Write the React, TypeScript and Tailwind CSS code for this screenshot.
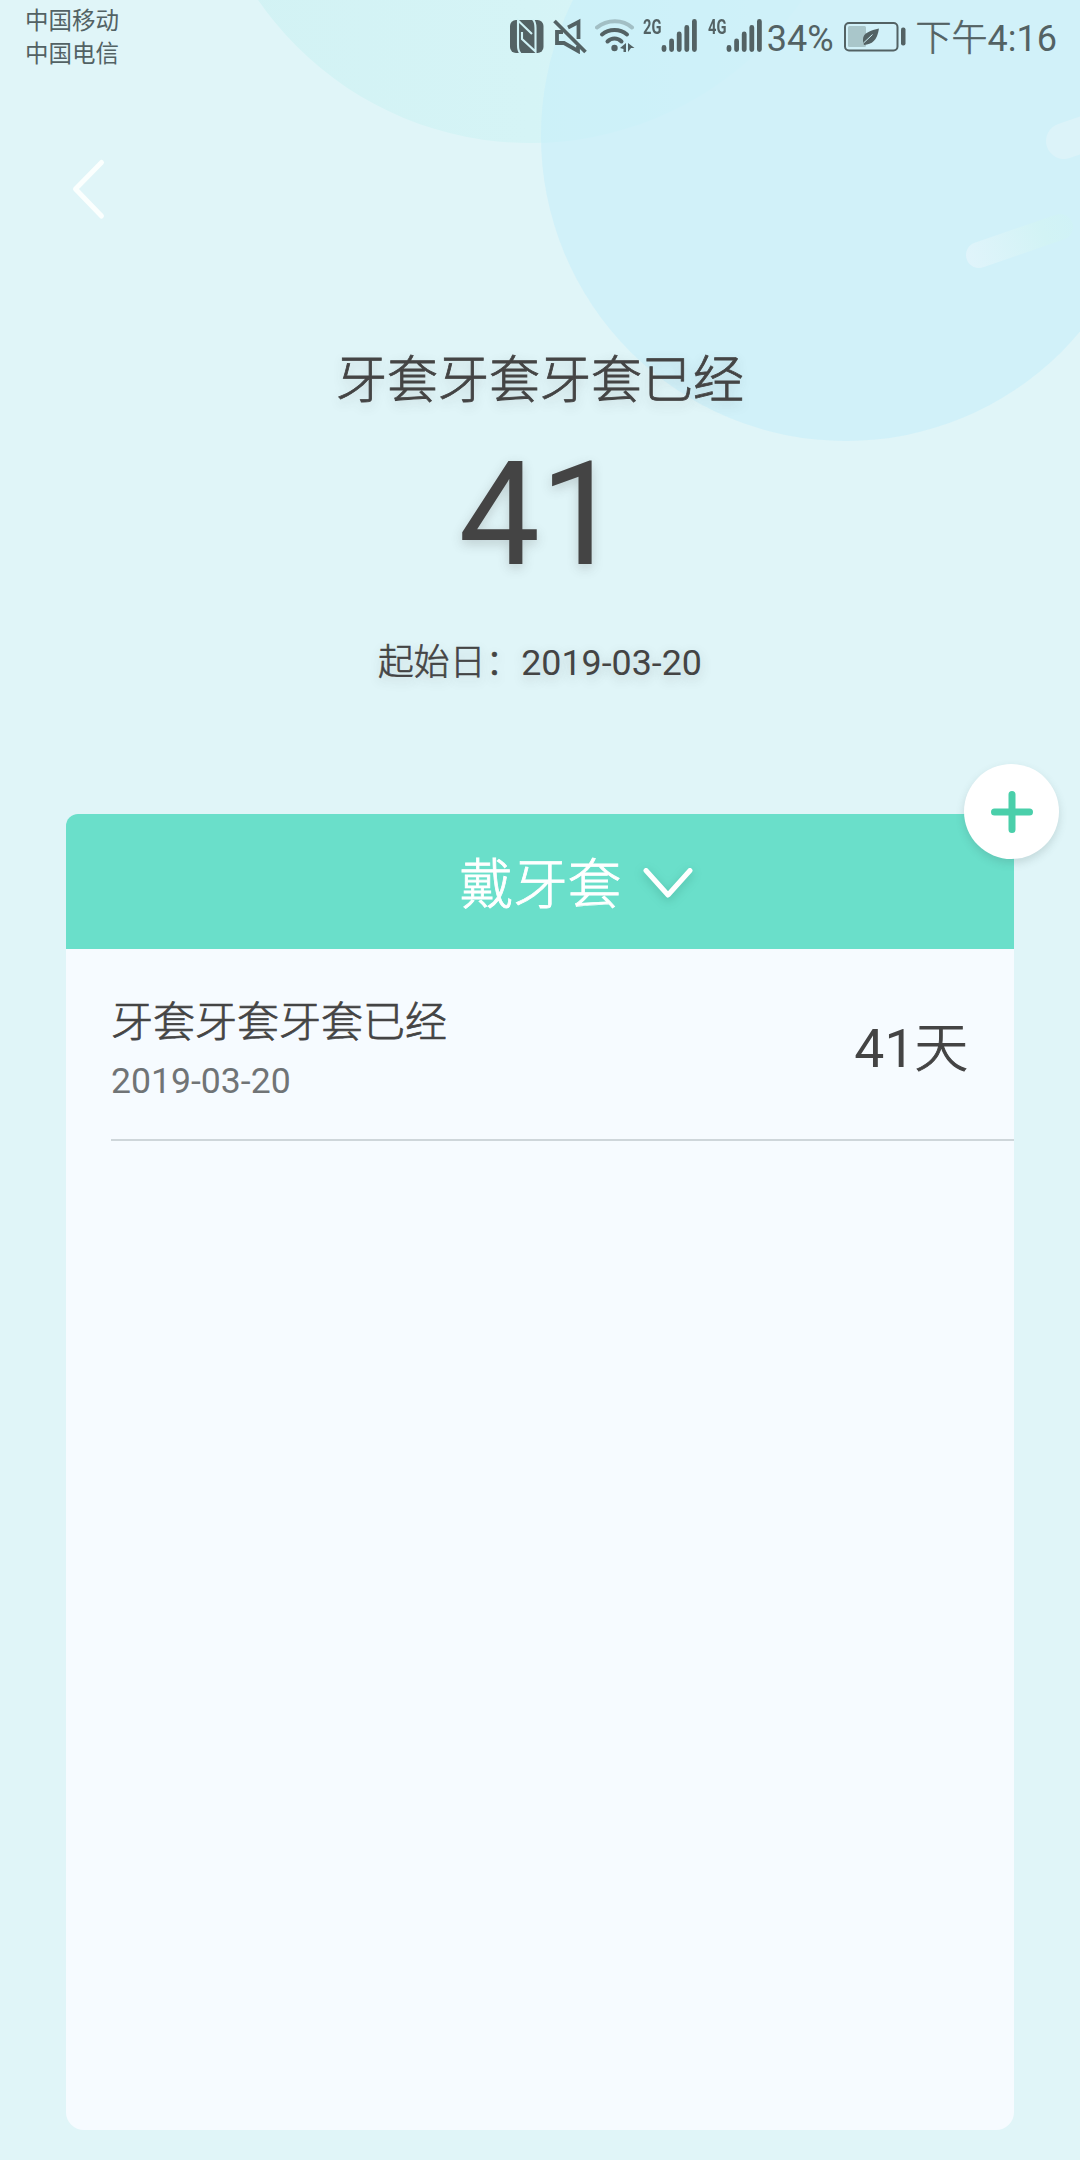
import { useState } from "react";

const records = [
  { id: 1, title: "牙套牙套牙套已经", date: "2019-03-20", days: 41 },
];

function Backdrop() {
  return (
    <svg
      className="absolute inset-0 pointer-events-none"
      width="1080"
      height="460"
      viewBox="0 0 1080 460"
      fill="none"
    >
      <defs>
        <linearGradient id="green" x1="0" y1="0" x2="1" y2="0">
          <stop offset="0" stopColor="#d2f2f4" />
          <stop offset="0.5" stopColor="#d5f4f6" />
          <stop offset="1" stopColor="#def5f8" />
        </linearGradient>
        <linearGradient
          id="comet"
          gradientUnits="userSpaceOnUse"
          x1="966"
          y1="258"
          x2="1076"
          y2="218"
        >
          <stop offset="0" stopColor="#e0f4fb" />
          <stop offset="0.7" stopColor="#d2f3f5" />
          <stop offset="1" stopColor="#d0f2f7" />
        </linearGradient>
      </defs>
      <circle cx="530" cy="-187" r="330" fill="url(#green)" />
      <circle cx="846" cy="136" r="305" fill="#c6effa" fillOpacity="0.6" />
      <path
        d="M979 255L1060 227"
        stroke="url(#comet)"
        strokeWidth="26"
        strokeLinecap="round"
      />
      <path
        d="M1064 141L1120 122"
        stroke="#dcf3f9"
        strokeWidth="36"
        strokeLinecap="round"
      />
    </svg>
  );
}

function Signal({ label }: { label: string }) {
  return (
    <div className="relative h-[34px] w-[54px]">
      <span className="absolute left-0 top-0 text-[21px] leading-[16px] font-bold origin-left scale-x-[0.7]">
        {label}
      </span>
      <svg
        className="absolute left-[18px] top-0"
        width="36"
        height="34"
        viewBox="0 0 36 34"
        stroke="currentColor"
        strokeWidth="4.8"
        strokeLinecap="round"
      >
        <path d="M3 28.5v2M10.6 22v8.5M18.2 15v15.5M25.8 8.5v22M33.4 2.5v28" />
      </svg>
    </div>
  );
}

function StatusBar() {
  return (
    <div className="relative h-[72px] pl-[25px] pr-[23px] flex justify-between text-[#536264]">
      <div className="pt-[5px] text-[23.5px] leading-[33px]">
        <p>中国移动</p>
        <p>中国电信</p>
      </div>

      <div className="flex items-start pt-[18px]">
        <svg width="34" height="36" viewBox="0 0 34 36" className="mr-[9px]">
          <rect x="0" y="2" width="33.5" height="33" rx="6" fill="currentColor" />
          <path
            d="M10.500 35.5C8 33 8 31 8 27V2.500L22 16M23 1.500C25.500 4 25.500 6 25.500 10V33.500L12 21V14"
            fill="none"
            stroke="#cff1f5"
            strokeWidth="2.1"
          />
        </svg>

        <svg
          width="34"
          height="36"
          viewBox="0 0 34 36"
          fill="none"
          stroke="currentColor"
          strokeWidth="3.8"
          className="mr-[8px]"
        >
          <path d="M15 9.5L25.500 4v17M10 14H4v11h7l14 8v-5" />
          <path d="M1.5 3l31 31" />
        </svg>

        <svg
          width="41"
          height="36"
          viewBox="0 0 41 36"
          fill="none"
          stroke="currentColor"
          strokeWidth="4"
          strokeLinecap="round"
          className="mr-[7px]"
        >
          <path d="M2 9.5C12 1 28 1 37 9.5" opacity="0.35" />
          <path d="M7 16.5c7-6 18-6 25 0M12.5 23.5c4-4 10-4 14 0" />
          <circle cx="19.5" cy="30" r="3.2" fill="currentColor" stroke="none" />
          <path
            d="M25 30l6-5v9h-2.500v-3zM33 25l6.500 5h-3.500l-3 4z"
            fill="currentColor"
            stroke="none"
          />
        </svg>

        <div className="flex pt-[1px] gap-[11px]">
          <Signal label="2G" />
          <Signal label="4G" />
        </div>

        <span className="ml-[5px] pt-[2px] text-[36px] leading-[38px]">34%</span>

        <svg
          width="62"
          height="36"
          viewBox="0 0 62 36"
          fill="none"
          className="ml-[10px] mr-[10px]"
        >
          <rect
            x="1"
            y="5"
            width="52.5"
            height="27.5"
            rx="4"
            stroke="currentColor"
            strokeWidth="2"
          />
          <rect x="4" y="8" width="18" height="21" rx="1.5" fill="#a9c6ca" />
          <path
            d="M35 10.5c-8 2-16 4-16 11 0 2 0 3 1 5.500 8-1 13-4 15-16.500z"
            fill="currentColor"
          />
          <path d="M19.5 25l9-8.5" stroke="#cff1f7" strokeWidth="1" />
          <rect x="57" y="9.5" width="4.5" height="18" rx="2" fill="currentColor" />
        </svg>

        <span className="pt-[2px] text-[36px] leading-[38px]">
          <span className="font-light [-webkit-text-stroke:0.6px]">下午</span>
          4:16
        </span>
      </div>
    </div>
  );
}

export default function App() {
  const [open, setOpen] = useState(false);

  return (
    <div className="relative flex flex-col w-[1080px] h-[2160px] overflow-hidden bg-[#e0f5f8] font-['Roboto','Noto_Sans_CJK_SC',sans-serif] text-[#444444]">
      <Backdrop />
      <StatusBar />

      <div className="relative h-[168px] px-[72px] pt-[86px]">
        <button aria-label="返回" className="block">
          <svg
            width="34"
            height="62"
            viewBox="0 0 34 62"
            fill="none"
            stroke="#fbfffe"
            strokeWidth="5"
            strokeLinecap="round"
            strokeLinejoin="round"
          >
            <path d="M29.5 4.5L3.500 31L29.500 58" />
          </svg>
        </button>
      </div>

      {/* Summary */}
      <div className="relative flex flex-col items-center h-[574px] pt-[103px] [text-shadow:0_4px_12px_rgba(68,68,68,0.22)]">
        <h1 className="text-[51px] leading-[76px] font-light [-webkit-text-stroke:0.8px]">
          {records[0].title}
        </h1>
        <p className="text-[145px] leading-[190px]">{records[0].days}</p>
        <p className="mt-[30px] text-[35.8px] leading-[48px]">
          <span className="font-light [-webkit-text-stroke:0.6px]">
            起始日：
          </span>
          {records[0].date}
        </p>
      </div>

      {/* Record list */}
      <div className="relative mx-[66px] h-[1316px] rounded-[18px] bg-[#f6fbff]">
        <button
          onClick={() => setOpen(!open)}
          className="flex items-center justify-center w-full h-[135px] pt-[9px] pl-[73px] rounded-t-[12px] bg-[#6adfca] text-white text-[54px] leading-[80px]"
        >
          <span className="font-light [-webkit-text-stroke:0.8px]">戴牙套</span>
          <svg
            width="52"
            height="36"
            viewBox="0 0 52 36"
            fill="none"
            stroke="currentColor"
            strokeWidth="5"
            strokeLinecap="round"
            strokeLinejoin="round"
            className="ml-[20px] mb-[6px] drop-shadow-[0_3px_5px_rgba(30,110,90,0.3)]"
          >
            <path d="M4 5.5L26 30L48 5.5" />
          </svg>
        </button>

        {records.map((item) => (
          <div
            key={item.id}
            className="flex items-center justify-between ml-[45px] pt-[12px] pr-[46px] h-[192px] border-b-2 border-[#ced6da]"
          >
            <div>
              <p className="text-[42px] leading-[62px] font-light [-webkit-text-stroke:0.7px]">
                {item.title}
              </p>
              <p className="text-[35.6px] leading-[54px] text-[#707476]">
                {item.date}
              </p>
            </div>
            <p className="text-[53.5px] leading-[78px] pb-[2px]">
              {item.days}
              <span className="font-light [-webkit-text-stroke:1px]">天</span>
            </p>
          </div>
        ))}

        <button
          aria-label="添加"
          className="absolute -top-[50px] -right-[45px] flex items-center justify-center w-[95px] h-[95px] rounded-full bg-white shadow-[0_4px_9px_rgba(60,90,90,0.18)]"
        >
          <svg
            width="42"
            height="42"
            viewBox="0 0 42 42"
            stroke="#4acfaa"
            strokeWidth="7"
            strokeLinecap="round"
          >
            <path d="M3.5 21h35M21 3.5v35" />
          </svg>
        </button>
      </div>
    </div>
  );
}
